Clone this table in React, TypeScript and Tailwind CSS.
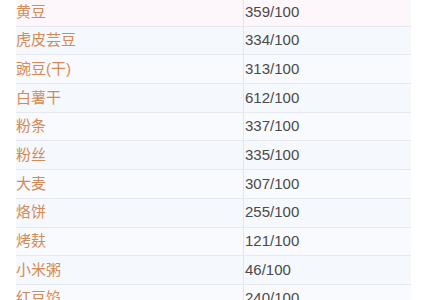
import React from "react";

const rows = [
  { name: "黄豆", value: "359/100" },
  { name: "虎皮芸豆", value: "334/100" },
  { name: "豌豆(干)", value: "313/100" },
  { name: "白薯干", value: "612/100" },
  { name: "粉条", value: "337/100" },
  { name: "粉丝", value: "335/100" },
  { name: "大麦", value: "307/100" },
  { name: "烙饼", value: "255/100" },
  { name: "烤麸", value: "121/100" },
  { name: "小米粥", value: "46/100" },
  { name: "红豆馅", value: "240/100" },
];

export default function App() {
  return (
    <div
      className="w-[427px] h-[300px] overflow-hidden bg-white"
      style={{ fontFamily: '"Liberation Sans", "Noto Sans CJK SC", sans-serif' }}
    >
      <div className="ml-4 mt-[-2px] w-[395px]">
        {rows.map((r, i) => (
          <div
            key={r.name}
            className={`flex h-[28.7px] items-center border-b border-[#e6eaf0] ${
              i === 0 ? "bg-[#fdf7fb]" : i % 2 === 1 ? "bg-[#f5f8fc]" : "bg-[#f9fafd]"
            }`}
          >
            <div className="w-[227px] h-full flex items-center text-[15px] text-[#d28b58]">
              {r.name}
            </div>
            <div className="flex-1 h-full flex items-center pl-[1px] border-l border-[#e3e7ec] text-[15px] text-[#4a4a4a]">
              {r.value}
            </div>
          </div>
        ))}
      </div>
    </div>
  );
}
